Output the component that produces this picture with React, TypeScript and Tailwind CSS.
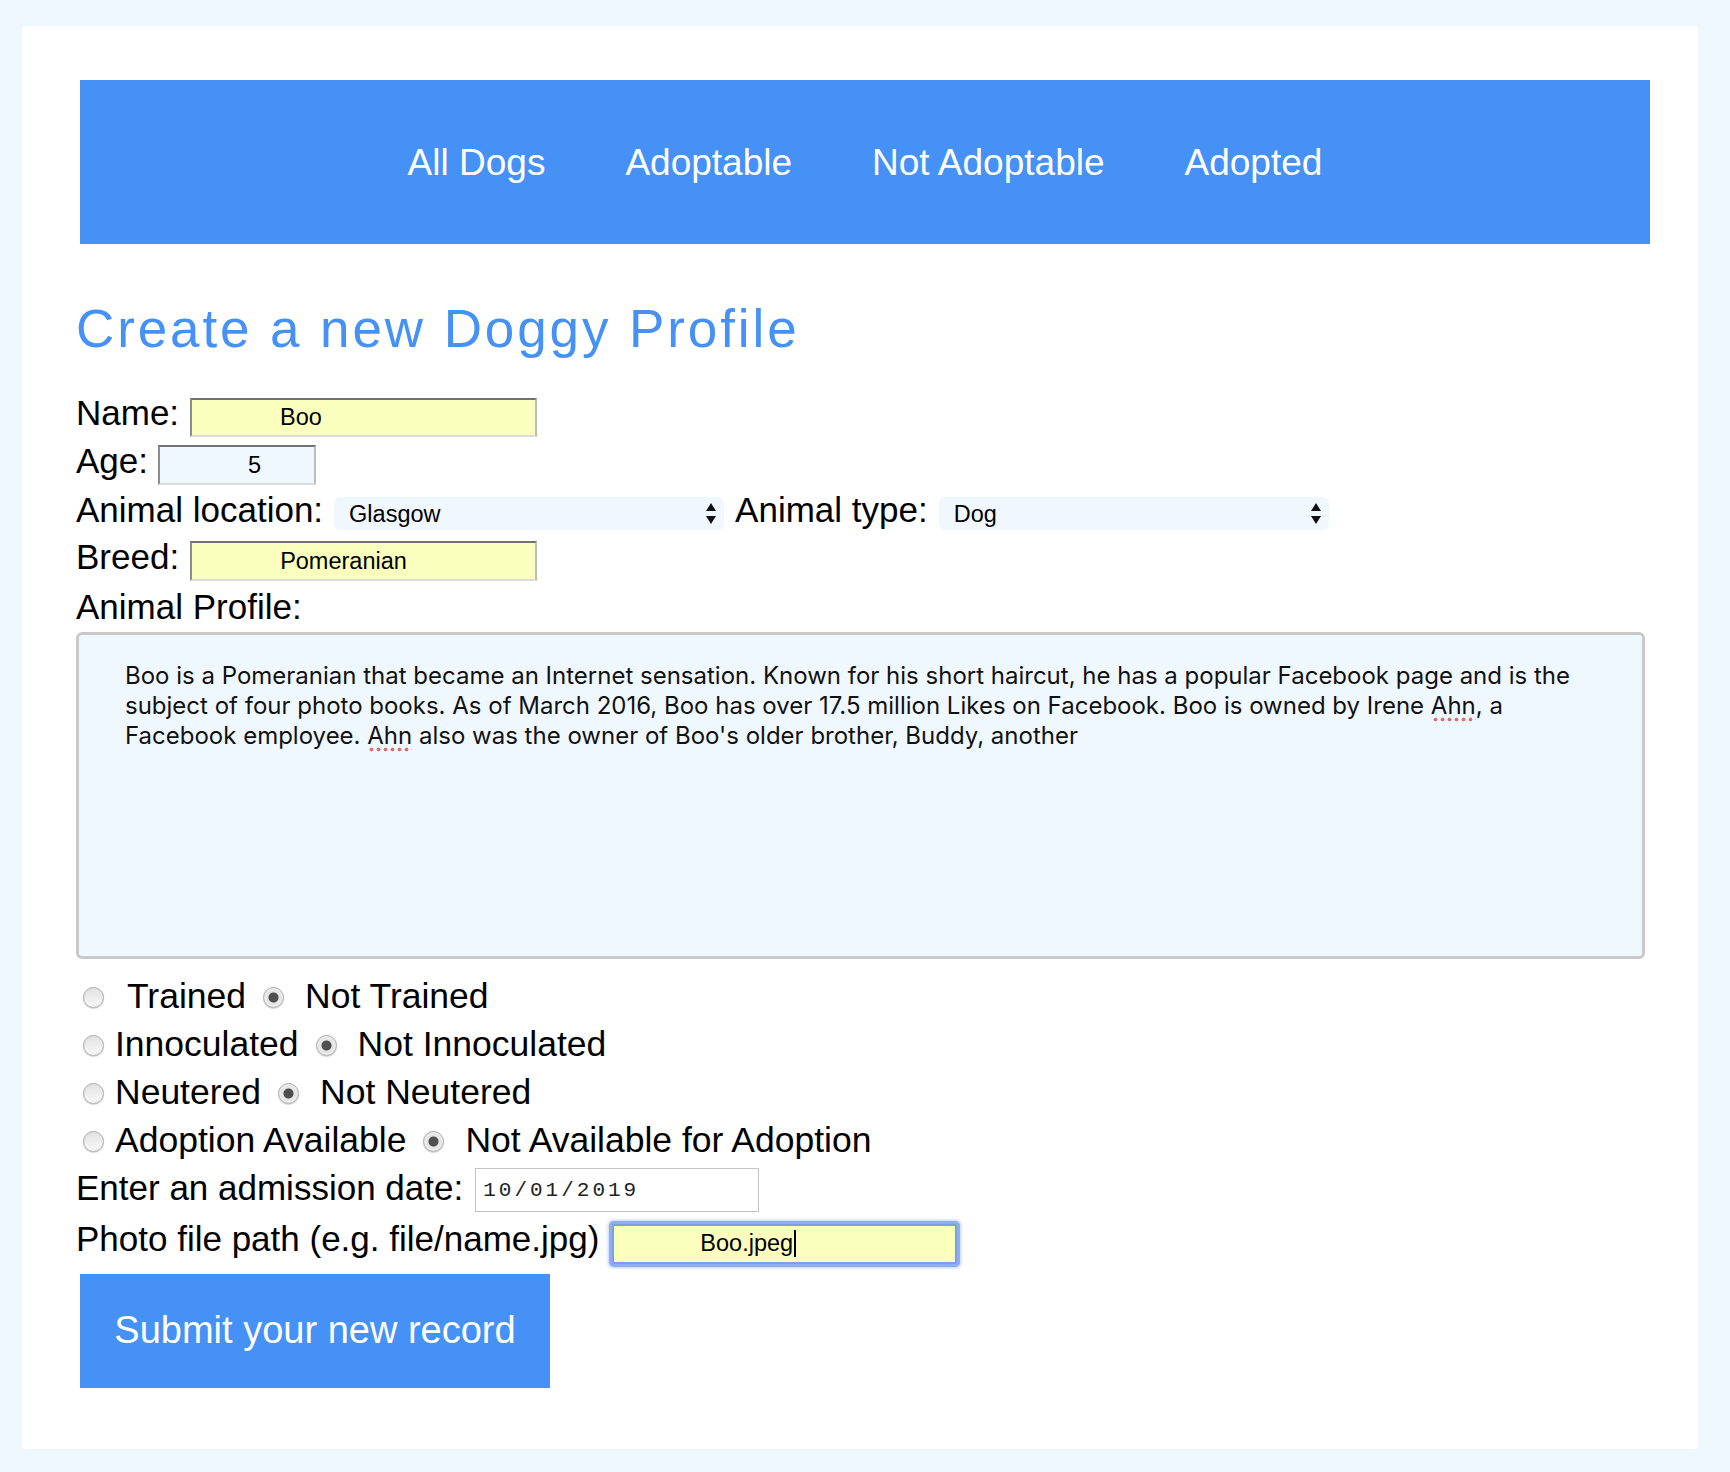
import React from "react";

const navLinks = ["All Dogs", "Adoptable", "Not Adoptable", "Adopted"];

const radioRows = [
  { name: "trained", yes: "Trained", no: "Not Trained", gap: "ml-[23px]" },
  { name: "innoculated", yes: "Innoculated", no: "Not Innoculated", gap: "ml-[11px]" },
  { name: "neutered", yes: "Neutered", no: "Not Neutered", gap: "ml-[11px]" },
  {
    name: "adoption",
    yes: "Adoption Available",
    no: "Not Available for Adoption",
    gap: "ml-[11px]",
  },
];

const label = "text-[35px] leading-[40px]";
const textInput =
  "border-2 border-t-[#727272] border-l-[#8c8c8c] border-r-[#bdbdbd] border-b-[#dcdcdc] pl-[88px] text-[23.5px] text-black outline-none";
const select =
  "h-[33px] w-[390px] appearance-none rounded-[6px] bg-[#f0f7ff] pl-[15px] text-[23.5px] text-black outline-none";
const radio =
  "mt-[3px] h-[21px] w-[21px] shrink-0 appearance-none rounded-full border border-[#a9a9a9] bg-[linear-gradient(#e2e2e2,#f7f7f7)] shadow-[0_1px_1px_rgba(0,0,0,0.18)] checked:bg-[radial-gradient(circle,#4f4f4f_0,#4f4f4f_4.5px,#e4e4e4_5.5px,#f5f5f5_100%)]";
const misspelled =
  "bg-[radial-gradient(circle,#e66b6b_1.7px,transparent_2.2px)] bg-[length:7px_5px] bg-[position:1px_100%] bg-repeat-x pb-[2px]";

function SelectArrows() {
  return (
    <svg
      className="pointer-events-none absolute right-[8px] top-[6px]"
      width="10"
      height="21"
      viewBox="0 0 10 21"
    >
      <path d="M5 0 L10 8 L0 8 Z" fill="#111" />
      <path d="M0 13 L10 13 L5 21 Z" fill="#111" />
    </svg>
  );
}

export default function App() {
  return (
    <div className="min-h-screen bg-[#f0f8ff] pt-[26px] pb-[25px] pl-[22px] pr-[32px] font-['Liberation_Sans',Arial,Helvetica,sans-serif] text-black">
      <div className="rounded-[4px] bg-white pt-[54px] pb-[61px] pl-[54px] pr-[48px]">
        <nav className="ml-[4px] flex h-[164px] items-center justify-center gap-[80px] bg-[#4691f5]">
          {navLinks.map((link) => (
            <a key={link} href="#" className="text-[37px] leading-none text-white">
              {link}
            </a>
          ))}
        </nav>

        <h1 className="mt-[55px] text-[53px] leading-[60px] tracking-[2.9px] text-[#4691f5]">
          Create a new Doggy Profile
        </h1>

        <form className="flex flex-col" onSubmit={(e) => e.preventDefault()}>
          <div className="mt-[33.5px] flex items-baseline gap-[11px]">
            <label className={label}>Name:</label>
            <input
              defaultValue="Boo"
              className={`${textInput} h-[39px] w-[347px] bg-[#faffbd]`}
            />
          </div>

          <div className="mt-[4px] flex items-baseline gap-[10px]">
            <label className={label}>Age:</label>
            <input
              defaultValue="5"
              className={`${textInput} h-[40px] w-[158px] bg-[#f0f8ff]`}
            />
          </div>

          <div className="mt-[4.5px] flex items-baseline gap-[11px]">
            <label className={label}>Animal location:</label>
            <div className="relative flex">
              <select className={select} defaultValue="Glasgow">
                <option>Glasgow</option>
                <option>Edinburgh</option>
              </select>
              <SelectArrows />
            </div>
            <label className={label}>Animal type:</label>
            <div className="relative flex">
              <select className={select} defaultValue="Dog">
                <option>Dog</option>
                <option>Cat</option>
              </select>
              <SelectArrows />
            </div>
          </div>

          <div className="mt-[7px] flex items-baseline gap-[11px]">
            <label className={label}>Breed:</label>
            <input
              defaultValue="Pomeranian"
              className={`${textInput} h-[40px] w-[347px] bg-[#faffbd]`}
            />
          </div>

          <label className={`${label} mt-[6px]`}>Animal Profile:</label>

          <div className="mt-[5px] h-[327px] w-[1569px] rounded-[6px] border-[3px] border-[#c9c9c9] bg-[#f0f8ff] pl-[46px] pt-[26px] font-['Inter','Noto_Sans',sans-serif] text-[24px] leading-[30px] text-[#111]">
            <p className="whitespace-nowrap">
              Boo is a Pomeranian that became an Internet sensation. Known for his short
              haircut, he has a popular Facebook page and is the
            </p>
            <p className="whitespace-nowrap">
              subject of four photo books. As of March 2016, Boo has over 17.5 million
              Likes on Facebook. Boo is owned by Irene <span className={misspelled}>Ahn</span>, a
            </p>
            <p className="whitespace-nowrap">
              Facebook employee. <span className={misspelled}>Ahn</span> also was the owner
              of Boo's older brother, Buddy, another
            </p>
          </div>

          <div className="mt-[13px] flex flex-col">
            {radioRows.map((row) => (
              <div key={row.name} className="flex h-[48px] items-center">
                <input type="radio" name={row.name} className={`${radio} ml-[7px]`} />
                <label className={`${row.gap} text-[35.5px] leading-[48px]`}>{row.yes}</label>
                <input
                  type="radio"
                  name={row.name}
                  defaultChecked
                  className={`${radio} ml-[17px]`}
                />
                <label className="ml-[21px] text-[35.5px] leading-[48px]">{row.no}</label>
              </div>
            ))}
          </div>

          <div className="flex items-end gap-[12px]">
            <label className="text-[35px] leading-[48px]">Enter an admission date:</label>
            <input
              defaultValue="10/01/2019"
              className="h-[44px] w-[284px] border border-[#c4c4c4] bg-white pl-[7px] font-['Liberation_Mono',monospace] text-[21px] tracking-[3px] text-[#222] outline-none"
            />
          </div>

          <div className="mt-[7px] flex items-baseline gap-[13px]">
            <label className={label}>Photo file path (e.g. file/name.jpg)</label>
            <div className="relative flex">
              <input
                defaultValue="Boo.jpeg"
                className="h-[40px] w-[345px] rounded-[2px] border-2 border-[#7b9fe4] bg-[#faffbd] pl-[86px] text-[23.5px] text-black shadow-[0_0_0_3px_#8eaef2,0_0_3px_4px_rgba(110,150,235,0.45)] outline-none"
              />
              <span className="absolute left-[182px] top-[6px] h-[27px] w-[2px] bg-black" />
            </div>
          </div>

          <button
            type="submit"
            className="mt-[10px] ml-[4px] h-[114px] w-[470px] bg-[#4691f5] text-[38px] text-white"
          >
            Submit your new record
          </button>
        </form>
      </div>
    </div>
  );
}
